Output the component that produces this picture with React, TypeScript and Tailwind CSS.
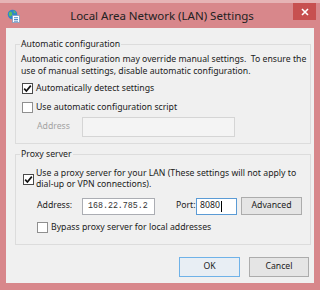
import React from "react";

function Check({ checked, className = "" }: { checked?: boolean; className?: string }) {
  return (
    <div
      className={`w-[11px] h-[11px] shrink-0 border bg-white flex items-center justify-center ${
        checked ? "border-[#4a4a4a]" : "border-[#8f8f8f]"
      } ${className}`}
    >
      {checked && (
        <svg width="9" height="9" viewBox="0 0 9 9">
          <path d="M1.2 4.6 L3.4 7 L7.8 1.6" fill="none" stroke="#111" strokeWidth="1.7" />
        </svg>
      )}
    </div>
  );
}

export default function App() {
  return (
    <div className="w-[320px] h-[290px] bg-[#d8878b] flex flex-col font-['Noto_Sans',sans-serif] text-[#1b1b1b] overflow-hidden">
      {/* Title bar */}
      <div className="h-[28px] shrink-0 relative flex items-center border-t-[3px] border-[#e6b3b5]">
        <svg className="absolute left-[7px] top-[6px]" width="13" height="14" viewBox="0 0 13 14">
          <circle cx="5.5" cy="5.5" r="4.8" fill="#2f86c9" />
          <path d="M2 3.5 Q4 2 5 4 Q6 6 4 7 Q2.5 8 2 6Z" fill="#5fc15a" />
          <path d="M6.5 1.5 Q8.5 2 8.8 4 Q7.5 4.5 6.8 3.2Z" fill="#5fc15a" />
          <rect x="5.5" y="6.5" width="7" height="7" fill="#ffffff" stroke="#7a9cc0" strokeWidth="0.8" />
          <rect x="7" y="8.3" width="4" height="0.9" fill="#3a7bc0" />
          <rect x="7" y="10" width="4" height="0.9" fill="#3a7bc0" />
          <rect x="7" y="11.7" width="4" height="0.9" fill="#3a7bc0" />
        </svg>
        <div className="flex-1 text-center text-[11.5px] leading-none text-[#222] pl-[4px]">
          Local Area Network (LAN) Settings
        </div>
        <div className="absolute right-[4px] top-0 w-[23px] h-[17px] bg-[#c75050] flex items-center justify-center">
          <svg width="8" height="8" viewBox="0 0 8 8">
            <path d="M1 1 L7 7 M7 1 L1 7" stroke="#fff" strokeWidth="1.6" />
          </svg>
        </div>
      </div>

      {/* Client */}
      <div className="mx-[6px] h-[255px] bg-[#f0f0f0] pl-[9px] pr-[3px] flex flex-col text-[8.7px]">
        {/* Group 1 */}
        <div className="relative mt-[16px] h-[100px] border border-[#dcdcdc] pl-[5px] pt-[8px] flex flex-col">
          <div className="absolute top-[-7px] left-[4px] bg-[#f0f0f0] px-[1px] leading-[12px]">
            Automatic configuration
          </div>
          <div className="leading-[12px] whitespace-pre">
            {"Automatic configuration may override manual settings.  To ensure the\nuse of manual settings, disable automatic configuration."}
          </div>
          <div className="mt-[4px] h-[14px] flex items-center">
            <Check checked className="ml-[1px]" />
            <span className="ml-[3px] leading-[14px]">Automatically detect settings</span>
          </div>
          <div className="mt-[5px] h-[14px] flex items-center">
            <Check className="ml-[1px]" />
            <span className="ml-[3px] leading-[14px]">Use automatic configuration script</span>
          </div>
          <div className="mt-[3px] h-[20px] flex items-center">
            <span className="ml-[16px] w-[45px] text-[#a3a3a3]">Address</span>
            <div className="w-[153px] h-[20px] border border-[#d5d5d5] bg-[#f4f4f4]" />
          </div>
        </div>

        {/* Group 2 */}
        <div className="relative mt-[10px] h-[91px] border border-[#dcdcdc] pl-[5px] pt-[13px] flex flex-col">
          <div className="absolute top-[-7px] left-[4px] bg-[#f0f0f0] px-[1px] leading-[12px]">
            Proxy server
          </div>
          <div className="flex items-center">
            <Check checked className="ml-[2px]" />
            <span className="ml-[2px] leading-[11px]">
              Use a proxy server for your LAN (These settings will not apply to
              <br />
              dial-up or VPN connections).
            </span>
          </div>
          <div className="mt-[7px] flex items-center h-[18px]">
            <span className="ml-[16px] w-[45px]">Address:</span>
            <div className="w-[73px] h-[17px] border border-[#abadb3] bg-white flex items-center pl-[5px] font-['Liberation_Mono',monospace] text-[8.3px] text-[#333]">
              168.22.785.2
            </div>
            <span className="ml-[21px] w-[20px]">Port:</span>
            <div className="w-[41px] h-[17px] border border-[#5b9bd5] bg-white flex items-center pl-[3px]">
              8080<span className="w-[1px] h-[11px] bg-black ml-[1px]" />
            </div>
            <div className="ml-[4px] w-[61px] h-[18px] border border-[#acacac] bg-[#e5e5e5] flex items-center justify-center">
              Advanced
            </div>
          </div>
          <div className="mt-[5px] h-[14px] flex items-center">
            <Check className="ml-[16px]" />
            <span className="ml-[3px] leading-[14px]">Bypass proxy server for local addresses</span>
          </div>
        </div>

        {/* Buttons */}
        <div className="mt-[12px] flex justify-end pr-[2px] gap-[9px]">
          <div className="w-[61px] h-[20px] border border-[#6fb2e8] bg-[#e8eef4] flex items-center justify-center">
            OK
          </div>
          <div className="w-[60px] h-[20px] border border-[#acacac] bg-[#e5e5e5] flex items-center justify-center">
            Cancel
          </div>
        </div>
      </div>
    </div>
  );
}
